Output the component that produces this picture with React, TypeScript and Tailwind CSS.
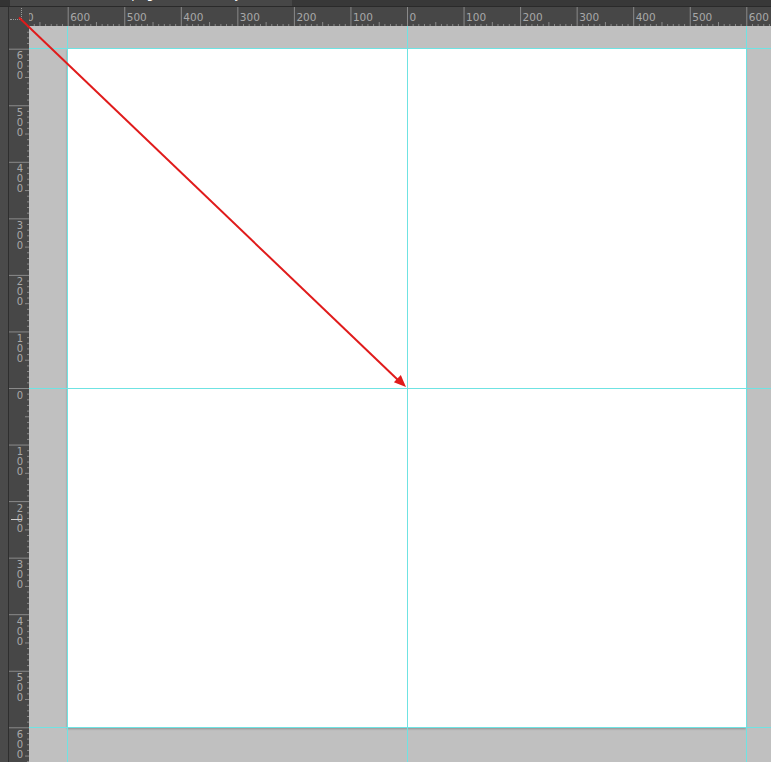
import React from "react";

const SCALE = 0.5655;
const FONT = '"DejaVu Sans", "Liberation Sans", sans-serif';

function TopRuler() {
  const origin = 378; // 407 - 29
  const ticks: React.ReactNode[] = [];
  for (let u = -800; u <= 800; u += 10) {
    const x = origin + u * SCALE + 0.5;
    if (u % 100 === 0) {
      ticks.push(<line key={"t" + u} x1={x} x2={x} y1={0} y2={19} stroke="#8a8a8a" strokeWidth={1} />);
      ticks.push(
        <text key={"l" + u} x={x + 2} y={14} fontSize={10.5} fill="#a8a8a8" fontFamily={FONT}>
          {Math.abs(u)}
        </text>
      );
    } else if (u % 50 === 0) {
      ticks.push(<line key={"t" + u} x1={x} x2={x} y1={15} y2={19} stroke="#8a8a8a" strokeWidth={1} />);
    } else {
      ticks.push(<line key={"t" + u} x1={x} x2={x} y1={17} y2={19} stroke="#8a8a8a" strokeWidth={1} />);
    }
  }
  return (
    <svg width={742} height={19} className="block overflow-hidden">
      {ticks}
    </svg>
  );
}

function LeftRuler() {
  const origin = 362; // 388 - 26
  const ticks: React.ReactNode[] = [];
  for (let u = -800; u <= 800; u += 10) {
    const y = origin + u * SCALE + 0.5;
    if (u % 100 === 0) {
      ticks.push(<line key={"t" + u} x1={0} x2={20} y1={y} y2={y} stroke="#8a8a8a" strokeWidth={1} />);
      const digits = String(Math.abs(u)).split("");
      digits.forEach((d, i) => {
        ticks.push(
          <text
            key={"l" + u + "-" + i}
            x={11}
            y={y + 10 + i * 10}
            fontSize={10}
            fill="#a8a8a8"
            fontFamily={FONT}
            textAnchor="middle"
          >
            {d}
          </text>
        );
      });
    } else if (u % 50 === 0) {
      ticks.push(<line key={"t" + u} x1={16} x2={20} y1={y} y2={y} stroke="#8a8a8a" strokeWidth={1} />);
    } else {
      ticks.push(<line key={"t" + u} x1={18} x2={20} y1={y} y2={y} stroke="#8a8a8a" strokeWidth={1} />);
    }
  }
  ticks.push(<line key="cursor" x1={2} x2={13} y1={493.5} y2={493.5} stroke="#d0d0d0" strokeWidth={1} />);
  return (
    <svg width={20} height={736} className="block overflow-hidden">
      {ticks}
    </svg>
  );
}

export default function App() {
  return (
    <div className="relative w-[771px] h-[762px] overflow-hidden bg-[#c0c0c0] flex flex-col">
      {/* tab bar */}
      <div className="flex h-[7px] shrink-0 bg-[#383838] border-b border-[#2a2a2a]">
        <div className="w-[10px] bg-[#333333]" />
        <div className="relative w-[282px] bg-[#474747] overflow-hidden">
          <span
            className="absolute left-[58px] top-[-13px] whitespace-nowrap text-[12px] leading-[14px] text-white"
            style={{ fontFamily: FONT }}
          >
            Untitled-1.png @ 66,7% (Layer 1, RGB/8) *
          </span>
        </div>
        <div className="flex-1" />
      </div>
      {/* ruler row */}
      <div className="flex h-[19px] shrink-0">
        <div className="w-[9px] bg-[#4a4a4a] border-r border-[#2e2e2e]" />
        <div className="relative w-[20px] bg-[#474747]">
          <div className="absolute left-[1px] top-[12px] w-[12px] border-t border-dotted border-[#9a9a9a]" />
          <div className="absolute left-[12px] top-[1px] h-[11px] border-l border-dotted border-[#9a9a9a]" />
        </div>
        <div className="relative flex-1 bg-[#474747] overflow-hidden">
          <TopRuler />
        </div>
      </div>
      {/* main row */}
      <div className="flex flex-1 min-h-0">
        <div className="w-[9px] bg-[#4a4a4a] border-r border-[#2e2e2e]" />
        <div className="w-[20px] bg-[#474747] overflow-hidden">
          <LeftRuler />
        </div>
        <div className="relative flex-1 bg-[#c0c0c0] overflow-hidden pl-[38px] pt-[22px]">
          <div className="w-[679px] h-[679px] bg-white shadow-[0_2px_2px_rgba(0,0,0,0.25)]" />
          {/* guides */}
          <div className="absolute z-10 top-0 bottom-0 left-[38px] w-px bg-[#6fe3e3]" />
          <div className="absolute z-10 top-0 bottom-0 left-[378px] w-px bg-[#6fe3e3]" />
          <div className="absolute z-10 top-0 bottom-0 left-[717px] w-px bg-[#6fe3e3]" />
          <div className="absolute z-10 left-0 right-0 top-[22px] h-px bg-[#6fe3e3]" />
          <div className="absolute z-10 left-0 right-0 top-[362px] h-px bg-[#6fe3e3]" />
          <div className="absolute z-10 left-0 right-0 top-[701px] h-px bg-[#6fe3e3]" />
        </div>
      </div>
      {/* arrow overlay */}
      <svg className="absolute inset-0 z-20 pointer-events-none" width={771} height={762}>
        <line x1={19} y1={17.5} x2={398} y2={380} stroke="#e01b1b" strokeWidth={2} />
        <polygon points="406,387 400.8,375.1 393.9,382.3" fill="#e01b1b" />
      </svg>
    </div>
  );
}
